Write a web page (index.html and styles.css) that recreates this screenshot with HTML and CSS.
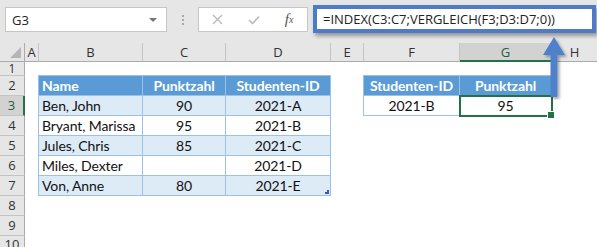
FILE: index.html
```html
<!DOCTYPE html>
<html lang="de">

<head>
    <meta charset="UTF-8">
    <title>INDEX VERGLEICH</title>
    <link rel="stylesheet" href="styles.css">
</head>

<body>
    <div class="window">
        <div class="topbar">
            <div class="namebox">
                <span>G3</span>
                <span class="drop"></span>
            </div>
            <div class="grip"><i></i><i></i><i></i></div>
            <div class="fxbox">
                <span class="slot">
                    <svg width="11" height="11" viewBox="0 0 11 11"><path d="M1 1L10 10M10 1L1 10" stroke="#b9b9b9" stroke-width="1.3" fill="none"/></svg>
                </span>
                <span class="slot">
                    <svg width="12" height="10" viewBox="0 0 12 10"><path d="M1 5L4.5 8.5L11 1.5" stroke="#b9b9b9" stroke-width="1.6" fill="none"/></svg>
                </span>
                <span class="slot fx">f<sub>x</sub></span>
            </div>
            <div class="formula">=INDEX(C3:C7;VERGLEICH(F3;D3:D7;0))</div>
        </div>

        <div class="sheet">
            <div class="corner"><span></span></div>
            <div class="colhead">A</div>
            <div class="colhead">B</div>
            <div class="colhead">C</div>
            <div class="colhead">D</div>
            <div class="colhead">E</div>
            <div class="colhead">F</div>
            <div class="colhead active">G</div>
            <div class="colhead last">H</div>

            <div class="rowhead short">1</div>
            <div class="rowhead">2</div>
            <div class="rowhead active">3</div>
            <div class="rowhead">4</div>
            <div class="rowhead">5</div>
            <div class="rowhead">6</div>
            <div class="rowhead">7</div>
            <div class="rowhead">8</div>
            <div class="rowhead">9</div>
            <div class="rowhead tail">10</div>

            <div class="tbl students">
                <div class="th left">Name</div>
                <div class="th">Punktzahl</div>
                <div class="th">Studenten-ID</div>

                <div class="td left band">Ben, John</div>
                <div class="td band">90</div>
                <div class="td band">2021-A</div>

                <div class="td left">Bryant, Marissa</div>
                <div class="td">95</div>
                <div class="td">2021-B</div>

                <div class="td left band">Jules, Chris</div>
                <div class="td band">85</div>
                <div class="td band">2021-C</div>

                <div class="td left">Miles, Dexter</div>
                <div class="td"></div>
                <div class="td">2021-D</div>

                <div class="td left band">Von, Anne</div>
                <div class="td band">80</div>
                <div class="td band resize">2021-E</div>
            </div>

            <div class="tbl lookup">
                <div class="th">Studenten-ID</div>
                <div class="th">Punktzahl</div>
                <div class="td">2021-B</div>
                <div class="td selected">95</div>
            </div>
        </div>

        <svg class="arrow" width="30" height="66" viewBox="0 0 30 66">
            <defs>
                <filter id="shade" x="-50%" y="-20%" width="200%" height="150%">
                    <feDropShadow dx="2" dy="2" stdDeviation="1.5" flood-color="#000" flood-opacity="0.35"/>
                </filter>
            </defs>
            <g filter="url(#shade)" fill="#5080cc">
                <polygon points="14,3 3,21 25,21"/>
                <rect x="10.5" y="20" width="7" height="43" rx="1"/>
            </g>
        </svg>
    </div>
</body>

</html>
```

FILE: styles.css
```css
* {
    box-sizing: border-box;
    margin: 0;
    padding: 0;
}

body {
    background-color: #ffffff;
    width: 597px;
    height: 247px;
    overflow: hidden;
}

.window {
    position: relative;
    width: 597px;
    height: 247px;
    overflow: hidden;
    font-family: 'Open Sans', 'Noto Sans', sans-serif;
}

/* formula bar */

.topbar {
    height: 43px;
    background-color: #e6e6e6;
    display: flex;
    align-items: flex-start;
    padding: 0 1px 0 5px;
}

.namebox {
    margin-top: 7px;
    width: 162px;
    height: 25px;
    background-color: #fff;
    border: 1px solid #c6c6c6;
    display: flex;
    align-items: center;
    justify-content: space-between;
    padding: 0 9px 0 6px;
    font-size: 13px;
    color: #222;
}

.drop {
    width: 0;
    height: 0;
    border-left: 4px solid transparent;
    border-right: 4px solid transparent;
    border-top: 4px solid #777;
}

.grip {
    width: 31px;
    height: 43px;
    display: flex;
    flex-direction: column;
    align-items: center;
    justify-content: center;
    gap: 2px;
    padding-bottom: 4px;
}

.grip i {
    display: block;
    width: 2px;
    height: 2px;
    background-color: #a8a8a8;
}

.fxbox {
    margin-top: 7px;
    width: 110px;
    height: 25px;
    background-color: #fff;
    border: 1px solid #c6c6c6;
    display: flex;
    align-items: center;
    padding-left: 1px;
}

.slot {
    width: 36px;
    display: flex;
    justify-content: center;
    align-items: center;
}

.fx {
    font-family: 'Liberation Serif', serif;
    font-style: italic;
    font-size: 15px;
    color: #555;
    line-height: 1;
}

.fx sub {
    font-size: 10px;
    vertical-align: -1px;
}

.formula {
    margin: 5px 0 0 5px;
    flex: 1;
    height: 28px;
    background-color: #fff;
    border: 4px solid #4f7ac4;
    box-shadow: 2px 3px 4px rgba(0, 0, 0, 0.35);
    font-size: 13px;
    line-height: 20px;
    color: #222;
    padding-left: 6px;
    white-space: nowrap;
}

/* grid */

.sheet {
    display: grid;
    grid-template-columns: 25px 14px 104px 83px 105px 33px 96px 92px 1fr;
    grid-template-rows: 19px 14px repeat(9, 20px);
    background-color: #fff;
}

.corner {
    background-color: #e6e6e6;
    border-right: 1px solid #ababab;
    border-bottom: 1px solid #ababab;
    position: relative;
}

.corner span {
    position: absolute;
    right: 3px;
    bottom: 3px;
    width: 11px;
    height: 11px;
    background-color: #b5b5b5;
    clip-path: polygon(100% 0, 100% 100%, 0 100%);
}

.colhead {
    background-color: #e6e6e6;
    border-right: 1px solid #c4c4c4;
    border-bottom: 1px solid #ababab;
    font-size: 13px;
    line-height: 18px;
    text-align: center;
    color: #333;
}

.colhead.last {
    border-right: none;
}

.colhead.active {
    background-color: #d2d2d2;
    border-bottom: 2px solid #217346;
    color: #1e5e3a;
}

.rowhead {
    grid-column: 1;
    background-color: #e6e6e6;
    border-right: 1px solid #ababab;
    border-bottom: 1px solid #c4c4c4;
    font-size: 13px;
    line-height: 19px;
    text-align: center;
    color: #333;
    overflow: hidden;
}

.rowhead.short {
    font-size: 12px;
    line-height: 13px;
    overflow: visible;
}

.rowhead.tail {
    line-height: 17px;
}

.rowhead.active {
    background-color: #d2d2d2;
    border-right: 2px solid #217346;
    color: #1e5e3a;
}

/* tables */

.tbl {
    display: grid;
    grid-auto-rows: 20px;
    margin: -1px 0 0 -1px;
    border-left: 1px solid #9bc2e6;
    border-top: 1px solid #9bc2e6;
    font-family: Lato, 'Liberation Sans', sans-serif;
    font-size: 14px;
    letter-spacing: -0.1px;
    color: #111;
}

.students {
    grid-column: 3 / 6;
    grid-row: 3 / 9;
    grid-template-columns: 104px 83px 105px;
}

.lookup {
    grid-column: 7 / 9;
    grid-row: 3 / 5;
    grid-template-columns: 96px 92px;
}

.th,
.td {
    border-right: 1px solid #9bc2e6;
    border-bottom: 1px solid #9bc2e6;
    line-height: 19px;
    text-align: center;
    white-space: nowrap;
    padding: 0 3px;
}

.th {
    background-color: #5b9bd5;
    color: #fff;
    font-weight: 700;
}

.left {
    text-align: left;
}

.band {
    background-color: #ddebf7;
}

.resize {
    position: relative;
}

.resize::after {
    content: "";
    position: absolute;
    right: 1px;
    bottom: 1px;
    width: 4px;
    height: 4px;
    background-color: #4655b5;
    clip-path: polygon(100% 0, 100% 100%, 0 100%, 0 50%, 50% 50%, 50% 0);
}

.selected {
    position: relative;
    outline: 2px solid #217346;
    outline-offset: -1px;
}

.selected::after {
    content: "";
    position: absolute;
    right: -4px;
    bottom: -4px;
    width: 6px;
    height: 6px;
    background-color: #217346;
    border: 1px solid #fff;
}

.arrow {
    position: absolute;
    left: 540px;
    top: 34px;
}
```
